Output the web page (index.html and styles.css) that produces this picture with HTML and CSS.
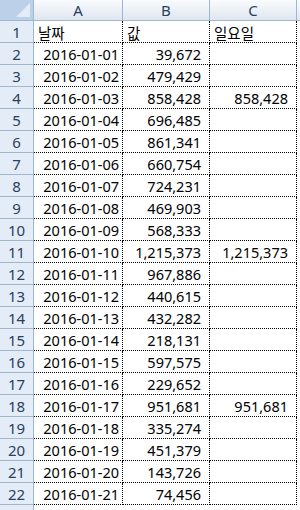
FILE: index.html
```html
<!DOCTYPE html>
<html lang="ko">
<head>
<meta charset="utf-8">
<link rel="stylesheet" href="styles.css">
</head>
<body>
<div class="sheet">
  <div class="corner"><span class="tri"></span></div>
  <div class="colhead">A</div>
  <div class="colhead">B</div>
  <div class="colhead">C</div>
  <div class="colhead tail"></div>

  <div class="rowhead">1</div><div class="cell txt">날짜</div><div class="cell txt">값</div><div class="cell txt">일요일</div><div class="rest"></div>
  <div class="rowhead">2</div><div class="cell date">2016-01-01</div><div class="cell num">39,672</div><div class="cell num"></div><div class="rest"></div>
  <div class="rowhead">3</div><div class="cell date">2016-01-02</div><div class="cell num">479,429</div><div class="cell num"></div><div class="rest"></div>
  <div class="rowhead">4</div><div class="cell date">2016-01-03</div><div class="cell num">858,428</div><div class="cell num">858,428</div><div class="rest"></div>
  <div class="rowhead">5</div><div class="cell date">2016-01-04</div><div class="cell num">696,485</div><div class="cell num"></div><div class="rest"></div>
  <div class="rowhead">6</div><div class="cell date">2016-01-05</div><div class="cell num">861,341</div><div class="cell num"></div><div class="rest"></div>
  <div class="rowhead">7</div><div class="cell date">2016-01-06</div><div class="cell num">660,754</div><div class="cell num"></div><div class="rest"></div>
  <div class="rowhead">8</div><div class="cell date">2016-01-07</div><div class="cell num">724,231</div><div class="cell num"></div><div class="rest"></div>
  <div class="rowhead">9</div><div class="cell date">2016-01-08</div><div class="cell num">469,903</div><div class="cell num"></div><div class="rest"></div>
  <div class="rowhead">10</div><div class="cell date">2016-01-09</div><div class="cell num">568,333</div><div class="cell num"></div><div class="rest"></div>
  <div class="rowhead">11</div><div class="cell date">2016-01-10</div><div class="cell num">1,215,373</div><div class="cell num">1,215,373</div><div class="rest"></div>
  <div class="rowhead">12</div><div class="cell date">2016-01-11</div><div class="cell num">967,886</div><div class="cell num"></div><div class="rest"></div>
  <div class="rowhead">13</div><div class="cell date">2016-01-12</div><div class="cell num">440,615</div><div class="cell num"></div><div class="rest"></div>
  <div class="rowhead">14</div><div class="cell date">2016-01-13</div><div class="cell num">432,282</div><div class="cell num"></div><div class="rest"></div>
  <div class="rowhead">15</div><div class="cell date">2016-01-14</div><div class="cell num">218,131</div><div class="cell num"></div><div class="rest"></div>
  <div class="rowhead">16</div><div class="cell date">2016-01-15</div><div class="cell num">597,575</div><div class="cell num"></div><div class="rest"></div>
  <div class="rowhead">17</div><div class="cell date">2016-01-16</div><div class="cell num">229,652</div><div class="cell num"></div><div class="rest"></div>
  <div class="rowhead">18</div><div class="cell date">2016-01-17</div><div class="cell num">951,681</div><div class="cell num">951,681</div><div class="rest"></div>
  <div class="rowhead">19</div><div class="cell date">2016-01-18</div><div class="cell num">335,274</div><div class="cell num"></div><div class="rest"></div>
  <div class="rowhead">20</div><div class="cell date">2016-01-19</div><div class="cell num">451,379</div><div class="cell num"></div><div class="rest"></div>
  <div class="rowhead">21</div><div class="cell date">2016-01-20</div><div class="cell num">143,726</div><div class="cell num"></div><div class="rest"></div>
  <div class="rowhead">22</div><div class="cell date">2016-01-21</div><div class="cell num">74,456</div><div class="cell num"></div><div class="rest"></div>
  <div class="rowhead"></div><div class="blank"></div><div class="blank"></div><div class="blank"></div><div class="rest"></div>
</div>
</body>
</html>
```

FILE: styles.css
```css
html, body {
  margin: 0;
  padding: 0;
  background: #ffffff;
}
body {
  width: 300px;
  height: 510px;
  overflow: hidden;
  font-family: "Noto Sans", "Noto Sans CJK KR", sans-serif;
  font-size: 14.5px;
  color: #000;
}
.sheet {
  display: grid;
  grid-template-columns: 34px 89px 87px 87px 1fr;
  grid-template-rows: 21px repeat(23, 22px);
}
.corner {
  position: relative;
  background: #bdd0ea;
  border-right: 1px solid #9eb6ce;
  border-bottom: 1px solid #9eb6ce;
  box-sizing: border-box;
}
.tri {
  position: absolute;
  right: 3px;
  bottom: 3px;
  width: 0;
  height: 0;
  border-left: 14px solid transparent;
  border-bottom: 14px solid #e4ecf7;
}
.colhead {
  box-sizing: border-box;
  background: linear-gradient(#f9fbfd 0%, #eef2f8 45%, #dfe6ef 100%);
  border-right: 1px solid #9eb6ce;
  border-bottom: 1px solid #9eb6ce;
  display: flex;
  align-items: center;
  justify-content: center;
  color: #27415f;
  font-size: 15px;
}
.colhead.tail {
  border-right: none;
}
.rowhead {
  box-sizing: border-box;
  background: #e4ecf7;
  border-right: 1px solid #9eb6ce;
  border-bottom: 1px solid #9eb6ce;
  display: flex;
  align-items: center;
  justify-content: center;
  color: #27415f;
  font-size: 15px;
  padding-top: 1px;
}
.cell {
  box-sizing: border-box;
  border-right: 1px dotted #000;
  border-bottom: 1px dotted #000;
  display: flex;
  align-items: center;
  white-space: nowrap;
  padding-top: 1px;
}
.txt {
  justify-content: flex-start;
  padding-left: 4px;
}
.date {
  justify-content: flex-end;
  padding-right: 3px;
}
.num {
  justify-content: flex-end;
  padding-right: 8px;
}
.blank, .rest {
  background: #fff;
}
```
